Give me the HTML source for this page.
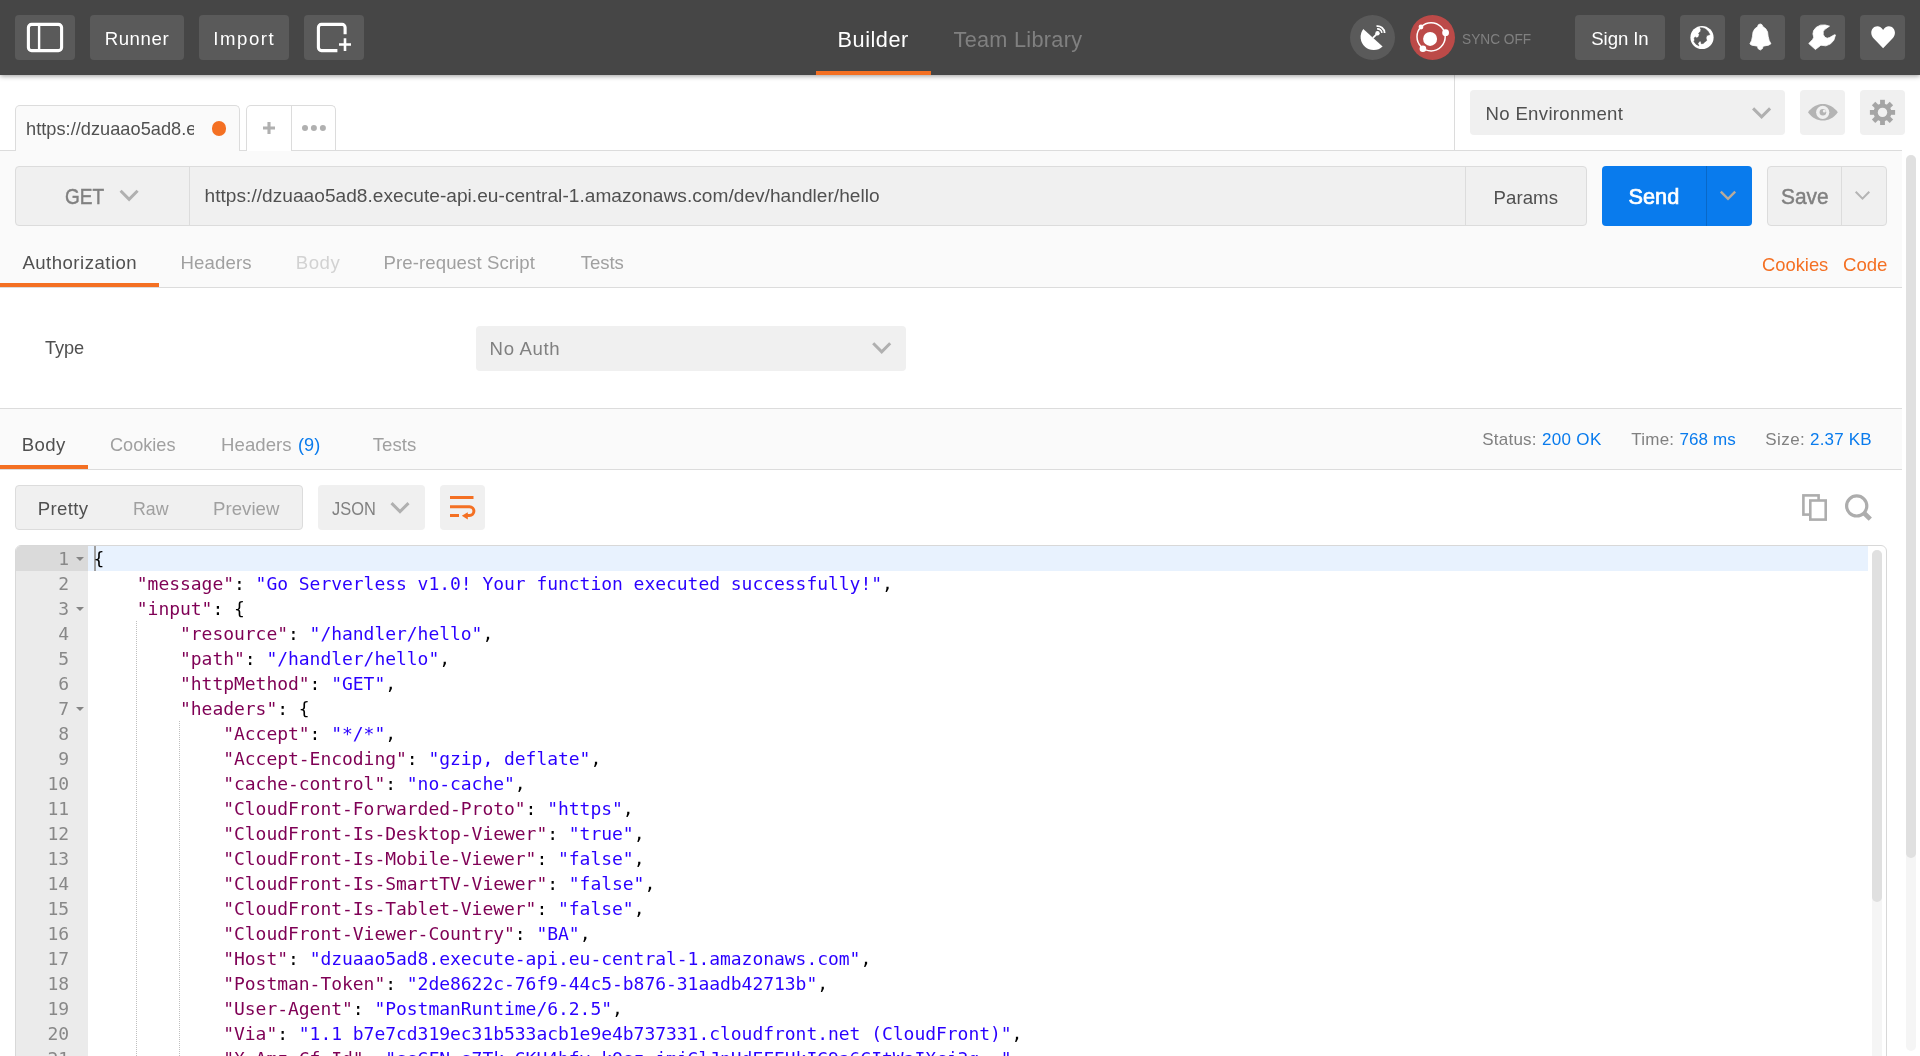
<!DOCTYPE html>
<html lang="en">
<head>
<meta charset="utf-8">
<title>Postman</title>
<style>
*{box-sizing:border-box;margin:0;padding:0}
html,body{width:1920px;height:1056px;overflow:hidden;background:#fff}
body{font-family:"Liberation Sans",sans-serif;color:#505050;position:relative}
.a{position:absolute}
.t{position:absolute;white-space:nowrap;line-height:1;z-index:10}
svg{position:absolute;overflow:visible;z-index:10}
#hdr{left:0;top:0;width:1920px;height:75px;background:#464646;box-shadow:0 1px 5px rgba(0,0,0,.4);z-index:5}
.hb{position:absolute;top:15px;height:45px;background:#5a5a5a;border-radius:4px}
.hc{position:absolute;top:15px;width:45px;height:45px;border-radius:50%}
.lb{position:absolute;background:#f0f0f0;border-radius:4px}
.ln{position:absolute;background:#dcdcdc}
#ed{will-change:transform;left:15px;top:545px;width:1872px;height:530px;border:1px solid #d8d8d8;border-radius:6px;overflow:hidden;background:#fff}
#gut{left:0;top:0;width:72px;height:530px;background:#ebebeb}
.code{font-family:"DejaVu Sans Mono","Liberation Mono",monospace;font-size:18px;letter-spacing:-0.037px}
.gl{position:absolute;left:0;width:53px;text-align:right;color:#888;height:25px;line-height:25px;white-space:pre}
.fold{position:absolute;left:59.5px;width:0;height:0;border-left:4px solid transparent;border-right:4px solid transparent;border-top:4px solid #858585}
.cl{position:absolute;left:77.6px;height:25px;line-height:25px;white-space:pre;color:#000}
.k{color:#7f0055}
.s{color:#2a00ff}
.ig{position:absolute;width:1px;background-image:linear-gradient(to bottom,#bfbfbf 50%,rgba(255,255,255,0) 50%);background-size:1px 2px}
</style>
</head>
<body>
<!-- ============ HEADER ============ -->
<div id="hdr" class="a">
  <div class="hb" style="left:15px;width:60px"></div>
  <div class="hb" style="left:90px;width:94px"></div>
  <div class="hb" style="left:199px;width:90px"></div>
  <div class="hb" style="left:304px;width:60px"></div>
  <div class="hc" style="left:1350px;background:#5a5a5a"></div>
  <div class="hc" style="left:1410px;background:#bc4a48"></div>
  <div class="hb" style="left:1575px;width:90px"></div>
  <div class="hb" style="left:1680px;width:45px"></div>
  <div class="hb" style="left:1740px;width:45px"></div>
  <div class="hb" style="left:1800px;width:45px"></div>
  <div class="hb" style="left:1860px;width:45px"></div>
  <div class="a" style="left:816px;top:71px;width:115px;height:4px;background:#f47023"></div>
</div>
<!-- ============ TAB BAR ============ -->
<div class="a" style="left:0;top:75px;width:1920px;height:75px;background:#fff"></div>
<div class="ln" style="left:0;top:150px;width:1902px;height:1px"></div>
<div class="a" style="left:15px;top:105px;width:225px;height:46px;background:#fafafa;border:1px solid #dcdcdc;border-bottom:none;border-radius:5px 5px 0 0"></div>
<div class="a" style="left:246px;top:105px;width:90px;height:45px;background:#fff;border:1px solid #dcdcdc;border-bottom:none;border-radius:5px 5px 0 0"></div>
<div class="ln" style="left:291px;top:106px;width:1px;height:45px"></div>
<div class="a" style="left:247px;top:150px;width:44px;height:1px;background:#fff"></div>
<div class="a" style="left:212px;top:121.4px;width:14.4px;height:14.4px;border-radius:50%;background:#f47023"></div>
<div class="ln" style="left:1454px;top:75px;width:1px;height:75px"></div>
<div class="lb" style="left:1470px;top:90px;width:315px;height:45px"></div>
<div class="lb" style="left:1800px;top:90px;width:45px;height:45px"></div>
<div class="lb" style="left:1860px;top:90px;width:45px;height:45px"></div>
<!-- ============ REQUEST ============ -->
<div class="a" style="left:0;top:151px;width:1902px;height:136px;background:#fafafa"></div>
<div class="a" style="left:15px;top:166px;width:1572px;height:60px;background:#f0f0f0;border:1px solid #dcdcdc;border-radius:4px"></div>
<div class="ln" style="left:189px;top:167px;width:1px;height:58px"></div>
<div class="ln" style="left:1465px;top:167px;width:1px;height:58px"></div>
<div class="a" style="left:1602px;top:166px;width:150px;height:60px;background:#097bed;border-radius:4px"></div>
<div class="a" style="left:1706px;top:166px;width:1px;height:60px;background:#0868c8"></div>
<div class="a" style="left:1767px;top:166px;width:120px;height:60px;background:#f0f0f0;border:1px solid #dcdcdc;border-radius:4px"></div>
<div class="ln" style="left:1841px;top:167px;width:1px;height:58px"></div>
<div class="a" style="left:0;top:283px;width:159px;height:4px;background:#f47023"></div>
<div class="ln" style="left:0;top:287px;width:1902px;height:1px"></div>
<!-- ============ AUTH ============ -->
<div class="lb" style="left:476px;top:326px;width:430px;height:45px"></div>
<div class="ln" style="left:0;top:408px;width:1902px;height:1px"></div>
<!-- ============ RESPONSE ============ -->
<div class="a" style="left:0;top:409px;width:1902px;height:60px;background:#fafafa"></div>
<div class="a" style="left:0;top:465px;width:88px;height:4px;background:#f47023"></div>
<div class="ln" style="left:0;top:469px;width:1902px;height:1px"></div>
<div class="a" style="left:15px;top:485px;width:288px;height:45px;background:#f0f0f0;border:1px solid #dcdcdc;border-radius:4px"></div>
<div class="lb" style="left:318px;top:485px;width:107px;height:45px"></div>
<div class="lb" style="left:440px;top:485px;width:45px;height:45px"></div>
<!-- outer scrollbar -->
<div class="a" style="left:1902px;top:151px;width:18px;height:905px;background:#fff"></div>
<div class="a" style="left:1906px;top:155px;width:10px;height:896px;border-radius:5px;background:#f5f5f5"></div>
<div class="a" style="left:1906px;top:155px;width:10px;height:703px;border-radius:5px;background:#e0e0e0"></div>
<!-- ============ EDITOR ============ -->
<div id="ed" class="a code">
<div id="gut" class="a"></div>
<div class="a" style="left:0;top:0;width:72px;height:25px;background:#dadada"></div>
<div class="a" style="left:72px;top:0;width:1780px;height:25px;background:#e8f2fe"></div>
<div class="a" style="left:78px;top:0;width:2px;height:25px;background:#9f9f9f"></div>
<div class="gl" style="top:0px">1</div>
<div class="fold" style="top:10.5px"></div>
<div class="cl" style="top:0px">{</div>
<div class="gl" style="top:25px">2</div>
<div class="cl" style="top:25px">    <span class="k">"message"</span>: <span class="s">"Go Serverless v1.0! Your function executed successfully!"</span>,</div>
<div class="gl" style="top:50px">3</div>
<div class="fold" style="top:60.5px"></div>
<div class="cl" style="top:50px">    <span class="k">"input"</span>: {</div>
<div class="gl" style="top:75px">4</div>
<div class="cl" style="top:75px">        <span class="k">"resource"</span>: <span class="s">"/handler/hello"</span>,</div>
<div class="gl" style="top:100px">5</div>
<div class="cl" style="top:100px">        <span class="k">"path"</span>: <span class="s">"/handler/hello"</span>,</div>
<div class="gl" style="top:125px">6</div>
<div class="cl" style="top:125px">        <span class="k">"httpMethod"</span>: <span class="s">"GET"</span>,</div>
<div class="gl" style="top:150px">7</div>
<div class="fold" style="top:160.5px"></div>
<div class="cl" style="top:150px">        <span class="k">"headers"</span>: {</div>
<div class="gl" style="top:175px">8</div>
<div class="cl" style="top:175px">            <span class="k">"Accept"</span>: <span class="s">"*/*"</span>,</div>
<div class="gl" style="top:200px">9</div>
<div class="cl" style="top:200px">            <span class="k">"Accept-Encoding"</span>: <span class="s">"gzip, deflate"</span>,</div>
<div class="gl" style="top:225px">10</div>
<div class="cl" style="top:225px">            <span class="k">"cache-control"</span>: <span class="s">"no-cache"</span>,</div>
<div class="gl" style="top:250px">11</div>
<div class="cl" style="top:250px">            <span class="k">"CloudFront-Forwarded-Proto"</span>: <span class="s">"https"</span>,</div>
<div class="gl" style="top:275px">12</div>
<div class="cl" style="top:275px">            <span class="k">"CloudFront-Is-Desktop-Viewer"</span>: <span class="s">"true"</span>,</div>
<div class="gl" style="top:300px">13</div>
<div class="cl" style="top:300px">            <span class="k">"CloudFront-Is-Mobile-Viewer"</span>: <span class="s">"false"</span>,</div>
<div class="gl" style="top:325px">14</div>
<div class="cl" style="top:325px">            <span class="k">"CloudFront-Is-SmartTV-Viewer"</span>: <span class="s">"false"</span>,</div>
<div class="gl" style="top:350px">15</div>
<div class="cl" style="top:350px">            <span class="k">"CloudFront-Is-Tablet-Viewer"</span>: <span class="s">"false"</span>,</div>
<div class="gl" style="top:375px">16</div>
<div class="cl" style="top:375px">            <span class="k">"CloudFront-Viewer-Country"</span>: <span class="s">"BA"</span>,</div>
<div class="gl" style="top:400px">17</div>
<div class="cl" style="top:400px">            <span class="k">"Host"</span>: <span class="s">"dzuaao5ad8.execute-api.eu-central-1.amazonaws.com"</span>,</div>
<div class="gl" style="top:425px">18</div>
<div class="cl" style="top:425px">            <span class="k">"Postman-Token"</span>: <span class="s">"2de8622c-76f9-44c5-b876-31aadb42713b"</span>,</div>
<div class="gl" style="top:450px">19</div>
<div class="cl" style="top:450px">            <span class="k">"User-Agent"</span>: <span class="s">"PostmanRuntime/6.2.5"</span>,</div>
<div class="gl" style="top:475px">20</div>
<div class="cl" style="top:475px">            <span class="k">"Via"</span>: <span class="s">"1.1 b7e7cd319ec31b533acb1e9e4b737331.cloudfront.net (CloudFront)"</span>,</div>
<div class="gl" style="top:500px">21</div>
<div class="cl" style="top:500px">            <span class="k">"X-Amz-Cf-Id"</span>: <span class="s">"ssGFN-s7Tk-GKH4bfv-kQsz_jmjGlJnUdEFEUkIG9a6GItWaIXcj3g=="</span>,</div>
<div class="gl" style="top:525px">22</div>
<div class="cl" style="top:525px">            <span class="k">"X-Amzn-Trace-Id"</span>: <span class="s">"Root=1-59b2a1d5-3f1b0c6a2e4d7f8a9b0c1d2e"</span>,</div>
<div class="ig" style="left:120px;top:75px;height:460px"></div>
<div class="ig" style="left:163px;top:175px;height:360px"></div>
<div class="a" style="left:1856px;top:4px;width:10px;height:526px;border-radius:5px;background:#f5f5f5"></div>
<div class="a" style="left:1856px;top:4px;width:10px;height:352px;border-radius:5px;background:#e0e0e0"></div>
</div>
<!-- ============ ICONS ============ -->
<svg width="1920" height="1056" viewBox="0 0 1920 1056" style="left:0;top:0">
<!-- sidebar toggle -->
<rect x="28.4" y="24.4" width="33.2" height="26.2" rx="3.2" fill="none" stroke="#fff" stroke-width="3.1"/>
<rect x="37.9" y="24.4" width="2.4" height="26.2" fill="#fff"/>
<!-- new window -->
<path d="M345.1 34.2V27.4a3 3 0 0 0-3-3H321.4a3 3 0 0 0-3 3V47.6a3 3 0 0 0 3 3H337.4" fill="none" stroke="#fff" stroke-width="3.1"/>
<path d="M345 38.2V51M339 44.5H351" fill="none" stroke="#fff" stroke-width="2.6"/>
<!-- satellite dish -->
<g fill="#fff" stroke="none">
<path d="M1363.3 29.1 A13 13 0 0 0 1382.6 46.4 Z"/>
<circle cx="1377.5" cy="33.3" r="2.2"/>
</g>
<path d="M1372.9 37.9L1377.5 33.3" stroke="#fff" stroke-width="1.8" fill="none"/>
<path d="M1377.1 28.9A4.4 4.4 0 0 1 1381.9 32.9" stroke="#fff" stroke-width="1.6" fill="none"/>
<path d="M1376.5 26.2A7.1 7.1 0 0 1 1384.6 33" stroke="#fff" stroke-width="1.8" fill="none"/>
<!-- sync -->
<circle cx="1431.1" cy="36.8" r="14.1" fill="none" stroke="#fff" stroke-width="1.5"/>
<circle cx="1430.1" cy="38.9" r="7" fill="#fff"/>
<circle cx="1421" cy="27" r="2.4" fill="#fff"/>
<circle cx="1445.6" cy="32.7" r="3.4" fill="#fff"/>
<circle cx="1422.9" cy="48.7" r="3.3" fill="#fff"/>
<!-- globe -->
<circle cx="1702" cy="37.5" r="11.6" fill="#fff"/>
<polygon points="1700.08,27.79 1702.90,27.95 1705.55,28.95 1708.20,31.60 1709.86,34.58 1706.88,35.58 1706.05,37.90 1706.71,40.55 1704.89,41.88 1703.23,43.53 1701.24,43.70 1700.91,41.21 1699.58,41.21 1697.93,43.53 1698.92,45.85 1695.94,44.20 1693.95,41.54 1694.61,39.89 1694.12,38.06 1695.28,37.07 1696.93,38.06 1698.76,36.57 1699.25,34.58 1698.59,33.26 1700.58,31.27 1700.91,29.61" fill="#5a5a5a" stroke="#5a5a5a" stroke-width="0.6" stroke-linejoin="round"/>
<!-- bell -->
<polygon points="1760.22,23.96 1761.97,24.66 1762.85,26.58 1765.83,28.86 1767.58,32.02 1768.10,36.22 1769.15,40.42 1770.91,43.75 1768.63,45.15 1763.02,46.21 1762.50,48.48 1760.22,50.06 1757.94,48.48 1757.59,46.21 1751.81,45.15 1749.88,43.93 1751.64,40.42 1752.51,36.22 1753.04,32.02 1754.79,28.86 1757.59,26.76 1758.29,24.83" fill="#fff" stroke="#fff" stroke-width="0.8" stroke-linejoin="round"/>
<!-- wrench -->
<polygon points="1829.51,26.13 1825.20,24.97 1820.56,25.14 1816.25,27.29 1813.60,30.61 1812.94,33.92 1813.77,37.24 1812.61,39.56 1808.79,43.53 1815.42,49.50 1820.89,45.19 1825.86,45.85 1830.51,43.86 1833.82,40.22 1835.48,34.92 1834.48,34.75 1829.51,37.57 1827.19,38.23 1824.87,37.24 1823.21,34.58 1823.21,31.60 1824.54,29.61" fill="#fff" stroke="#fff" stroke-width="0.8" stroke-linejoin="round"/>
<!-- heart -->
<path transform="translate(1883.1 37.2) scale(0.955 0.985) translate(-1882.9 -37)" d="M1882.900 48.100l-9.800-9.900c-1.700-1.700-2.600-3.500-2.600-5.800c0-3.700 2.800-6.600 6.300-6.600c2.500 0 4.800 1.500 6.100 3.800c1.300-2.300 3.600-3.800 6.100-3.800c3.500 0 6.300 2.900 6.300 6.600c0 2.300-.9 4.100-2.600 5.800z" fill="#fff"/>
<!-- tab plus and dots -->
<path d="M269 122.100V133.900M263 128H275" stroke="#b0b0b0" stroke-width="3.100" fill="none"/>
<circle cx="305" cy="128" r="3" fill="#b0b0b0"/><circle cx="313.900" cy="128" r="3" fill="#b0b0b0"/><circle cx="322.900" cy="128" r="3" fill="#b0b0b0"/>
<!-- env chevron -->
<path d="M1753.100 108.400L1761.600 116.900L1770.100 108.400" stroke="#b0b0b0" stroke-width="3" fill="none"/>
<!-- eye -->
<path d="M1808 112.300C1812 106.500 1817.500 103.900 1822.900 103.900C1828.300 103.900 1833.800 106.500 1837.800 112.300C1833.800 118 1828.300 120.600 1822.900 120.600C1817.500 120.600 1812 118 1808 112.300Z" fill="#b4b4b4"/>
<circle cx="1822.700" cy="112.300" r="6.600" fill="#f0f0f0"/>
<circle cx="1822.900" cy="112.300" r="3.300" fill="#b4b4b4"/>
<circle cx="1824.300" cy="110.900" r="1.500" fill="#f0f0f0"/>
<!-- gear -->
<g fill="#a5a5a5" transform="translate(1882.500 112.400)">
<circle r="8.900"/>
<g id="tooth"><rect x="-2.400" y="-12.600" width="4.800" height="25.200"/></g>
<rect x="-2.400" y="-12.600" width="4.800" height="25.200" transform="rotate(45)"/>
<rect x="-2.400" y="-12.600" width="4.800" height="25.200" transform="rotate(90)"/>
<rect x="-2.400" y="-12.600" width="4.800" height="25.200" transform="rotate(135)"/>
<circle r="4.700" fill="#f0f0f0"/>
</g>
<!-- GET chevron -->
<path d="M120.600 190.800L129.100 199.300L137.600 190.800" stroke="#b0b0b0" stroke-width="3" fill="none"/>
<!-- send chevron -->
<path d="M1720.800 191.600L1728 198.800L1735.200 191.600" stroke="#b7ab9d" stroke-width="2.400" fill="none"/>
<!-- save chevron -->
<path d="M1855.700 191.800L1862.500 198.600L1869.300 191.800" stroke="#b4b4b4" stroke-width="2" fill="none"/>
<!-- auth chevron -->
<path d="M873.200 343.300L881.700 351.800L890.200 343.300" stroke="#b0b0b0" stroke-width="3" fill="none"/>
<!-- JSON chevron -->
<path d="M391.500 503.100L400 511.600L408.500 503.100" stroke="#b0b0b0" stroke-width="3" fill="none"/>
<!-- wrap icon -->
<path d="M450 497.600H473.500M450 506.700H469.500a4.400 4.400 0 0 1 0 8.800H466M450 515.500H459" stroke="#f47023" stroke-width="3" fill="none"/>
<path d="M461.800 515.800L467.800 512.200V519.600Z" fill="#f47023"/>
<!-- copy icon -->
<rect x="1803.400" y="495.400" width="15.200" height="19.200" fill="none" stroke="#adadad" stroke-width="2.600"/>
<rect x="1810.300" y="500.500" width="15.400" height="19.100" fill="#fff" stroke="#adadad" stroke-width="2.600"/>
<!-- search icon -->
<circle cx="1856.700" cy="505.900" r="10.100" fill="none" stroke="#adadad" stroke-width="3.200"/>
<path d="M1864.500 513.500L1870.300 519.200" stroke="#adadad" stroke-width="4.600" fill="none"/>
</svg>

<!-- ============ TEXTS ============ -->
<div id="txt" class="a" style="left:0;top:0;width:1920px;height:1056px;will-change:transform;z-index:10">
<span class="t" style="left:104.66px;top:30.26px;font-size:18.6px;color:#fff;letter-spacing:0.589px;">Runner</span>
<span class="t" style="left:213.37px;top:30.26px;font-size:18.6px;color:#fff;letter-spacing:1.511px;">Import</span>
<span class="t" style="left:837.60px;top:28.63px;font-size:21.7px;color:#fff;letter-spacing:0.513px;">Builder</span>
<span class="t" style="left:953.54px;top:28.63px;font-size:21.7px;color:#808080;letter-spacing:0.284px;">Team Library</span>
<span class="t" style="left:1462.01px;top:32.15px;font-size:14px;color:#808080;transform:scaleX(0.9781);transform-origin:0 0;">SYNC OFF</span>
<span class="t" style="left:1591.30px;top:30.26px;font-size:18.6px;color:#fff;letter-spacing:-0.085px;">Sign In</span>
<span class="t" style="left:1485.56px;top:105.26px;font-size:18.6px;color:#505050;letter-spacing:0.310px;">No Environment</span>
<span class="t" style="left:65.42px;top:185.63px;font-size:21.7px;color:#808080;transform:scaleX(0.8767);transform-origin:0 0;-webkit-text-stroke:0.45px #808080">GET</span>
<span class="t" style="left:204.55px;top:185.83px;font-size:19.1px;color:#505050;letter-spacing:0.029px;">https://dzuaao5ad8.execute-api.eu-central-1.amazonaws.com/dev/handler/hello</span>
<span class="t" style="left:1493.56px;top:189.26px;font-size:18.6px;color:#505050;letter-spacing:0.074px;">Params</span>
<span class="t" style="left:1628.45px;top:185.63px;font-size:21.7px;color:#fff;letter-spacing:0.073px;-webkit-text-stroke:0.7px #fff">Send</span>
<span class="t" style="left:1780.74px;top:185.63px;font-size:21.7px;color:#808080;transform:scaleX(0.9640);transform-origin:0 0;-webkit-text-stroke:0.45px #808080">Save</span>
<span class="t" style="left:22.39px;top:254.26px;font-size:18.6px;color:#505050;letter-spacing:0.479px;">Authorization</span>
<span class="t" style="left:180.56px;top:254.26px;font-size:18.6px;color:#a0a0a0;letter-spacing:0.139px;">Headers</span>
<span class="t" style="left:295.86px;top:254.26px;font-size:18.6px;color:#d2d2d2;letter-spacing:0.481px;">Body</span>
<span class="t" style="left:383.56px;top:254.26px;font-size:18.6px;color:#a0a0a0;letter-spacing:0.089px;">Pre-request Script</span>
<span class="t" style="left:580.69px;top:254.26px;font-size:18.6px;color:#a0a0a0;letter-spacing:-0.064px;">Tests</span>
<span class="t" style="left:1762.31px;top:256.26px;font-size:18.6px;color:#f47023;transform:scaleX(0.9869);transform-origin:0 0;">Cookies</span>
<span class="t" style="left:1843.00px;top:256.26px;font-size:18.6px;color:#f47023;letter-spacing:-0.016px;">Code</span>
<span class="t" style="left:44.92px;top:338.59px;font-size:18.2px;color:#505050;letter-spacing:-0.071px;">Type</span>
<span class="t" style="left:489.56px;top:340.26px;font-size:18.6px;color:#808080;letter-spacing:0.657px;">No Auth</span>
<span class="t" style="left:21.81px;top:436.26px;font-size:18.6px;color:#505050;letter-spacing:0.398px;">Body</span>
<span class="t" style="left:109.77px;top:436.26px;font-size:18.6px;color:#a0a0a0;transform:scaleX(0.9755);transform-origin:0 0;">Cookies</span>
<span class="t" style="left:221.06px;top:436.26px;font-size:18.6px;color:#a0a0a0;letter-spacing:0.055px;">Headers</span>
<span class="t" style="left:298.25px;top:436.26px;font-size:18.6px;color:#097bed;transform:scaleX(0.9760);transform-origin:0 0;">(9)</span>
<span class="t" style="left:372.69px;top:436.26px;font-size:18.6px;color:#a0a0a0;letter-spacing:0.049px;">Tests</span>
<span class="t" style="left:1482.30px;top:430.61px;font-size:17px;color:#808080;letter-spacing:0.225px;">Status:</span>
<span class="t" style="left:1541.90px;top:430.61px;font-size:17px;color:#097bed;letter-spacing:0.340px;">200 OK</span>
<span class="t" style="left:1631.36px;top:430.61px;font-size:17px;color:#808080;letter-spacing:0.197px;">Time:</span>
<span class="t" style="left:1679.40px;top:430.61px;font-size:17px;color:#097bed;letter-spacing:0.136px;">768 ms</span>
<span class="t" style="left:1765.30px;top:430.61px;font-size:17px;color:#808080;letter-spacing:0.429px;">Size:</span>
<span class="t" style="left:1810.00px;top:430.61px;font-size:17px;color:#097bed;letter-spacing:0.182px;">2.37 KB</span>
<span class="t" style="left:37.81px;top:500.26px;font-size:18.6px;color:#505050;letter-spacing:0.329px;">Pretty</span>
<span class="t" style="left:132.87px;top:500.26px;font-size:18.6px;color:#a0a0a0;transform:scaleX(0.9562);transform-origin:0 0;">Raw</span>
<span class="t" style="left:213.06px;top:500.26px;font-size:18.6px;color:#a0a0a0;letter-spacing:0.032px;">Preview</span>
<span class="t" style="left:331.60px;top:500.26px;font-size:18.6px;color:#808080;transform:scaleX(0.8815);transform-origin:0 0;">JSON</span>
<span class="t" style="left:26.10px;top:116.69px;width:168.40px;height:24px;line-height:24px;overflow:hidden;font-size:18.2px;letter-spacing:0.02px;color:#505050">https://dzuaao5ad8.execute-api.eu-central-1.amazonaws.com/dev/handler/hello</span>
</div>
</body>
</html>
